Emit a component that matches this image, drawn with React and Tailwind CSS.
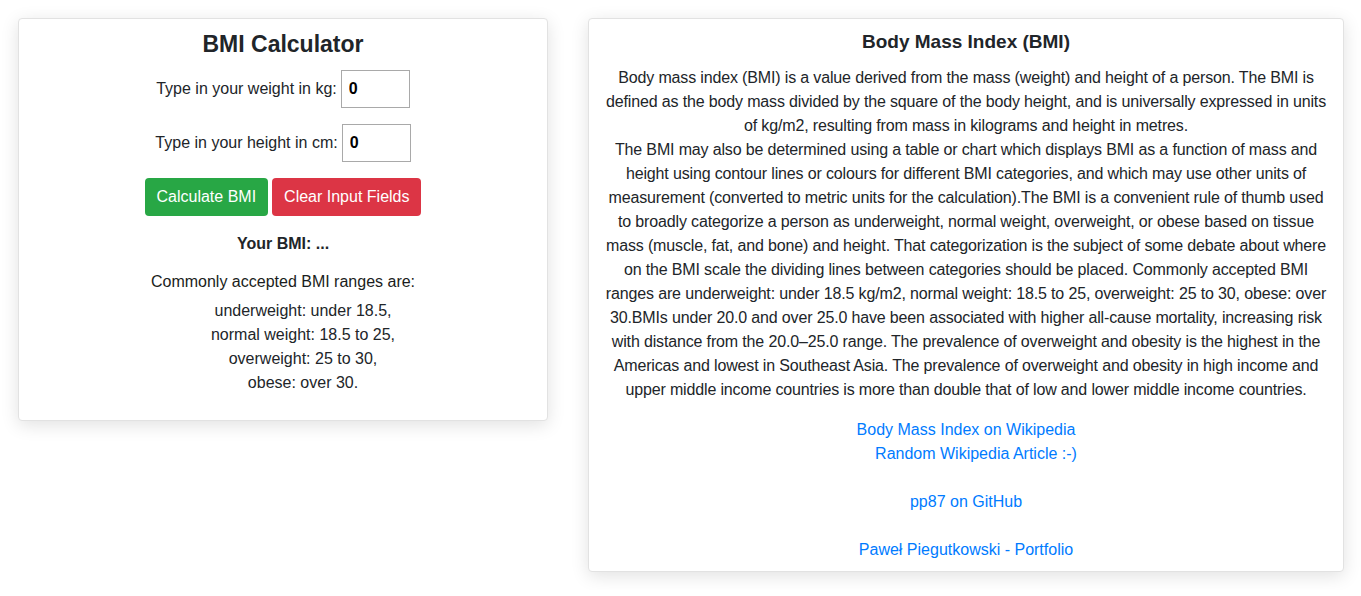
import React, { useState } from "react";

const ranges = [
  "underweight: under 18.5,",
  "normal weight: 18.5 to 25,",
  "overweight: 25 to 30,",
  "obese: over 30.",
];

// line breaks kept as in the original layout
const bmiText = [
  "Body mass index (BMI) is a value derived from the mass (weight) and height of a person. The BMI is",
  "defined as the body mass divided by the square of the body height, and is universally expressed in units",
  "of kg/m2, resulting from mass in kilograms and height in metres.",
  "The BMI may also be determined using a table or chart which displays BMI as a function of mass and",
  "height using contour lines or colours for different BMI categories, and which may use other units of",
  "measurement (converted to metric units for the calculation).The BMI is a convenient rule of thumb used",
  "to broadly categorize a person as underweight, normal weight, overweight, or obese based on tissue",
  "mass (muscle, fat, and bone) and height. That categorization is the subject of some debate about where",
  "on the BMI scale the dividing lines between categories should be placed. Commonly accepted BMI",
  "ranges are underweight: under 18.5 kg/m2, normal weight: 18.5 to 25, overweight: 25 to 30, obese: over",
  "30.BMIs under 20.0 and over 25.0 have been associated with higher all-cause mortality, increasing risk",
  "with distance from the 20.0–25.0 range. The prevalence of overweight and obesity is the highest in the",
  "Americas and lowest in Southeast Asia. The prevalence of overweight and obesity in high income and",
  "upper middle income countries is more than double that of low and lower middle income countries.",
];

const App = () => {
  const [weight, setWeight] = useState("0");
  const [height, setHeight] = useState("0");
  const [bmi, setBmi] = useState("...");

  const calculate = () => {
    const w = parseFloat(weight);
    const h = parseFloat(height) / 100;
    if (!w || !h) {
      setBmi("...");
      return;
    }
    setBmi((w / (h * h)).toFixed(2));
  };

  const clear = () => {
    setWeight("0");
    setHeight("0");
    setBmi("...");
  };

  return (
    <div
      className="flex items-start gap-[40px] p-[18px] bg-white text-[#212529] text-base leading-6"
      style={{ fontFamily: '"Liberation Sans", Arial, sans-serif' }}
    >
      {/* calculator card */}
      <div className="w-[530px] shrink-0 bg-white border border-[#e2e2e2] rounded shadow-[0_4px_18px_rgba(0,0,0,0.12)] pt-3 pb-[25px] flex flex-col items-center text-center">
        <h1 className="text-[23px] leading-[1.2] font-bold">BMI Calculator</h1>

        <div className="mt-[11px] flex items-center gap-1">
          <label>Type in your weight in kg:</label>
          <input
            type="text"
            value={weight}
            onChange={(e) => setWeight(e.target.value)}
            className="w-[69px] h-[38px] border border-[#a9a9a9] px-[7px] font-bold text-black outline-none"
          />
        </div>

        <div className="mt-[16px] flex items-center gap-1">
          <label>Type in your height in cm:</label>
          <input
            type="text"
            value={height}
            onChange={(e) => setHeight(e.target.value)}
            className="w-[69px] h-[38px] border border-[#a9a9a9] px-[7px] font-bold text-black outline-none"
          />
        </div>

        <div className="mt-[16px] flex gap-1">
          <button
            className="h-[38px] px-3 rounded bg-[#28a745] text-white hover:bg-[#218838]"
            onClick={calculate}
          >
            Calculate BMI
          </button>
          <button
            className="h-[38px] px-3 rounded bg-[#dc3545] text-white hover:bg-[#c82333]"
            onClick={clear}
          >
            Clear Input Fields
          </button>
        </div>

        <p className="mt-4 font-bold">Your BMI: {bmi}</p>

        <p className="mt-[14px] text-[#1a1d20]">Commonly accepted BMI ranges are:</p>

        <ul className="mt-[5px] pl-10 list-none">
          {ranges.map((r) => (
            <li key={r}>{r}</li>
          ))}
        </ul>
      </div>

      {/* info card */}
      <div className="w-[756px] shrink-0 bg-white border border-[#e2e2e2] rounded shadow-[0_4px_18px_rgba(0,0,0,0.12)] pt-3 pb-[9px] px-1 text-center">
        <h2 className="text-[19px] leading-[1.2] font-bold">Body Mass Index (BMI)</h2>

        <p className="mt-3 tracking-[-0.15px] whitespace-nowrap">
          {bmiText.map((line, i) => (
            <span key={i} className="block">{line}</span>
          ))}
        </p>

        <div className="mt-4 flex flex-col items-center text-[#007bff]">
          <a href="#" className="hover:underline">Body Mass Index on Wikipedia</a>
          <span className="pl-5">
            <a href="#" className="hover:underline">Random Wikipedia Article :-)</a>
          </span>
          <div className="h-6" />
          <a href="#" className="hover:underline">pp87 on GitHub</a>
          <div className="h-6" />
          <a href="#" className="hover:underline">Paweł Piegutkowski - Portfolio</a>
        </div>
      </div>
    </div>
  );
};

export default App;
